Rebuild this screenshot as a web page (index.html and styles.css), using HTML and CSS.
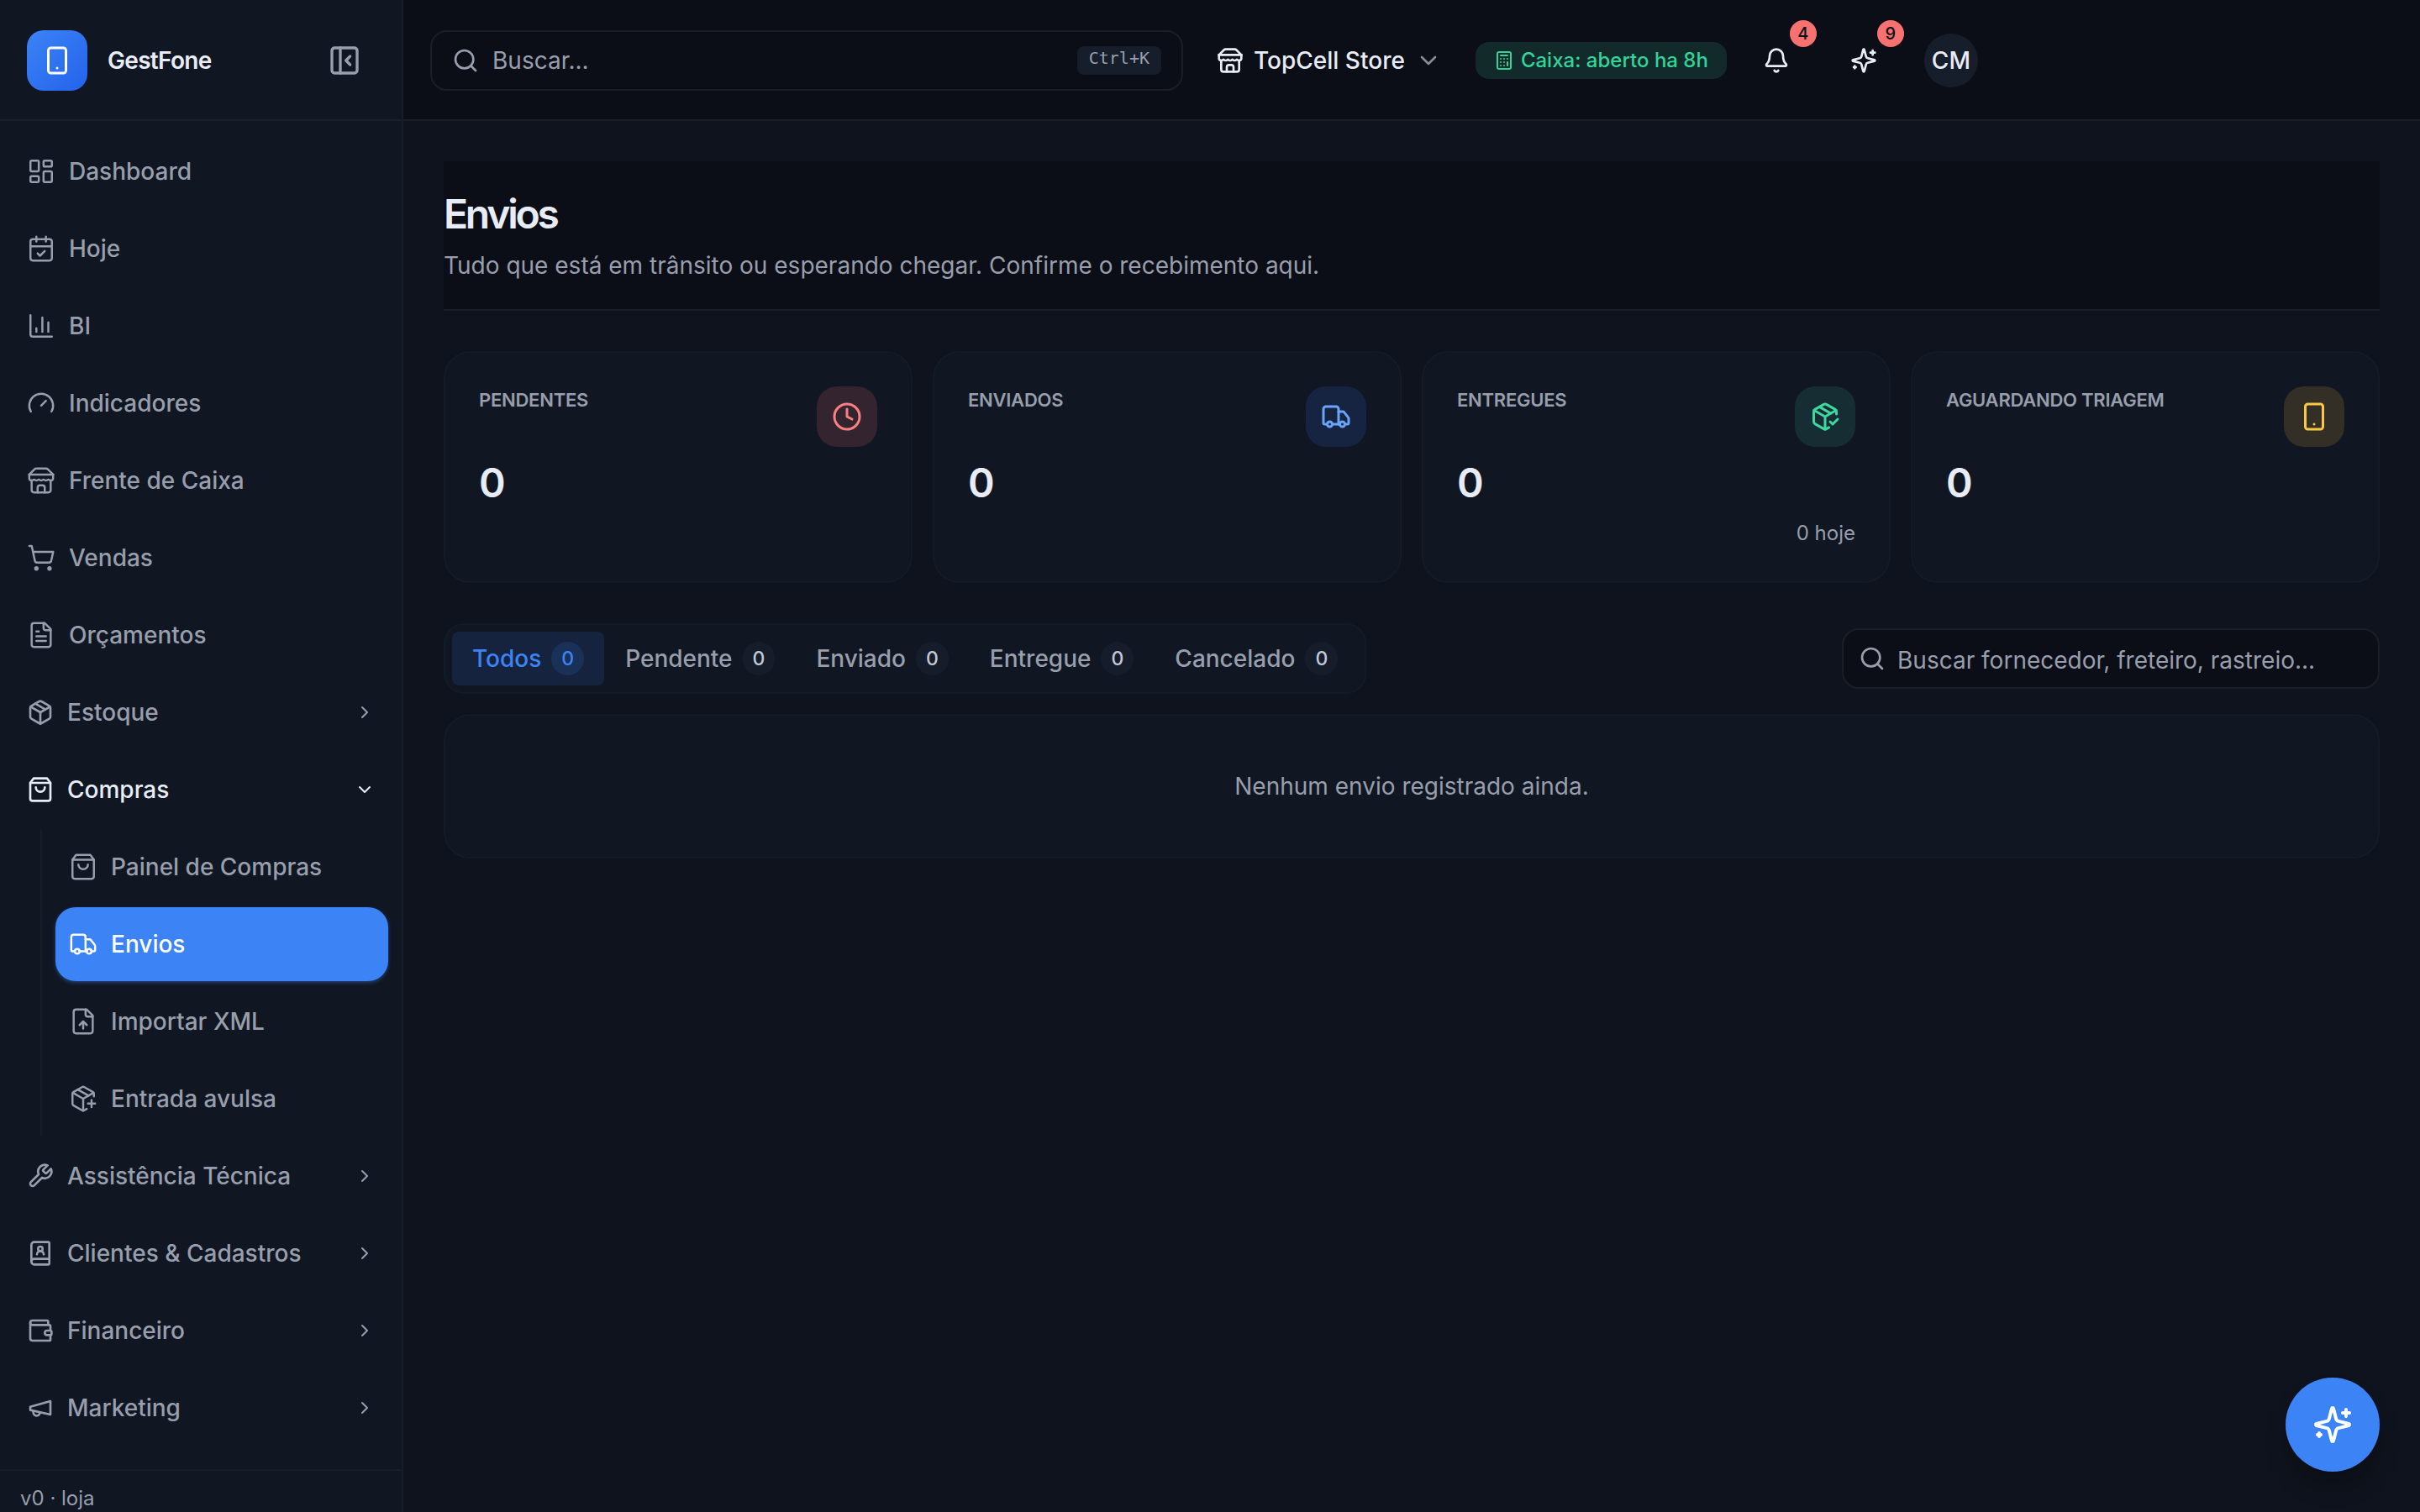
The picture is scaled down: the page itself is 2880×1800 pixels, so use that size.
FILE: index.html
```html
<!DOCTYPE html>
<html lang="pt-BR">
<head>
    <meta charset="UTF-8">
    <meta name="viewport" content="width=device-width, initial-scale=1.0">
    <title>Envios - GestFone</title>
    <link rel="stylesheet" href="styles.css">
</head>
<body>
    <!-- icons -->
    <svg class="sprite" width="0" height="0">
        <symbol id="phone" viewBox="0 0 24 24"><rect x="5" y="2" width="14" height="20" rx="2"/><path d="M12 18h.01"/></symbol>
        <symbol id="panel" viewBox="0 0 24 24"><rect x="3" y="3" width="18" height="18" rx="2"/><path d="M9 3v18"/><path d="m16 15-3-3 3-3"/></symbol>
        <symbol id="dashboard" viewBox="0 0 24 24"><rect x="3" y="3" width="7" height="9" rx="1"/><rect x="14" y="3" width="7" height="5" rx="1"/><rect x="14" y="12" width="7" height="9" rx="1"/><rect x="3" y="16" width="7" height="5" rx="1"/></symbol>
        <symbol id="calendar" viewBox="0 0 24 24"><path d="M8 2v4M16 2v4"/><rect x="3" y="4" width="18" height="18" rx="2"/><path d="M3 10h18"/><path d="m9 16 2 2 4-4"/></symbol>
        <symbol id="chart" viewBox="0 0 24 24"><path d="M3 3v16a2 2 0 0 0 2 2h16"/><path d="M18 17V9M13 17V5M8 17v-3"/></symbol>
        <symbol id="gauge" viewBox="0 0 24 24"><path d="m12 14 4-4"/><path d="M3.34 19a10 10 0 1 1 17.32 0"/></symbol>
        <symbol id="store" viewBox="0 0 24 24"><path d="m2 7 4.41-4.41A2 2 0 0 1 7.83 2h8.34a2 2 0 0 1 1.42.59L22 7"/><path d="M4 12v8a2 2 0 0 0 2 2h12a2 2 0 0 0 2-2v-8"/><path d="M15 22v-4a2 2 0 0 0-2-2h-2a2 2 0 0 0-2 2v4"/><path d="M2 7h20"/><path d="M22 7v3a2 2 0 0 1-2 2a2.7 2.7 0 0 1-1.59-.63.7.7 0 0 0-.82 0A2.7 2.7 0 0 1 16 12a2.7 2.7 0 0 1-1.59-.63.7.7 0 0 0-.82 0A2.7 2.7 0 0 1 12 12a2.7 2.7 0 0 1-1.59-.63.7.7 0 0 0-.82 0A2.7 2.7 0 0 1 8 12a2.7 2.7 0 0 1-1.59-.63.7.7 0 0 0-.82 0A2.7 2.7 0 0 1 4 12a2 2 0 0 1-2-2V7"/></symbol>
        <symbol id="cart" viewBox="0 0 24 24"><circle cx="8" cy="21" r="1"/><circle cx="19" cy="21" r="1"/><path d="M2.05 2.05h2l2.66 12.42a2 2 0 0 0 2 1.58h9.78a2 2 0 0 0 1.95-1.57l1.65-7.43H5.12"/></symbol>
        <symbol id="file-text" viewBox="0 0 24 24"><path d="M15 2H6a2 2 0 0 0-2 2v16a2 2 0 0 0 2 2h12a2 2 0 0 0 2-2V7Z"/><path d="M14 2v4a2 2 0 0 0 2 2h4"/><path d="M10 9H8M16 13H8M16 17H8"/></symbol>
        <symbol id="file-up" viewBox="0 0 24 24"><path d="M15 2H6a2 2 0 0 0-2 2v16a2 2 0 0 0 2 2h12a2 2 0 0 0 2-2V7Z"/><path d="M14 2v4a2 2 0 0 0 2 2h4"/><path d="M12 12v6"/><path d="m15 15-3-3-3 3"/></symbol>
        <symbol id="package" viewBox="0 0 24 24"><path d="M11 21.73a2 2 0 0 0 2 0l7-4A2 2 0 0 0 21 16V8a2 2 0 0 0-1-1.73l-7-4a2 2 0 0 0-2 0l-7 4A2 2 0 0 0 3 8v8a2 2 0 0 0 1 1.73z"/><path d="M12 22V12"/><path d="M3.29 7 12 12l8.71-5"/><path d="m7.5 4.27 9 5.15"/></symbol>
        <symbol id="package-plus" viewBox="0 0 24 24"><path d="M16 16h6M19 13v6"/><path d="M21 10V8a2 2 0 0 0-1-1.73l-7-4a2 2 0 0 0-2 0l-7 4A2 2 0 0 0 3 8v8a2 2 0 0 0 1 1.73l7 4a2 2 0 0 0 2 0l2-1.14"/><path d="m7.5 4.27 9 5.15"/><path d="M3.29 7 12 12l8.71-5M12 22V12"/></symbol>
        <symbol id="package-check" viewBox="0 0 24 24"><path d="m16 16 2 2 4-4"/><path d="M21 10V8a2 2 0 0 0-1-1.73l-7-4a2 2 0 0 0-2 0l-7 4A2 2 0 0 0 3 8v8a2 2 0 0 0 1 1.73l7 4a2 2 0 0 0 2 0l2-1.14"/><path d="m7.5 4.27 9 5.15"/><path d="M3.29 7 12 12l8.71-5M12 22V12"/></symbol>
        <symbol id="bag" viewBox="0 0 24 24"><path d="M6 2 3 6v14a2 2 0 0 0 2 2h14a2 2 0 0 0 2-2V6l-3-4Z"/><path d="M3 6h18"/><path d="M16 10a4 4 0 0 1-8 0"/></symbol>
        <symbol id="truck" viewBox="0 0 24 24"><path d="M14 18V6a2 2 0 0 0-2-2H4a2 2 0 0 0-2 2v11a1 1 0 0 0 1 1h2"/><path d="M15 18H9"/><path d="M19 18h2a1 1 0 0 0 1-1v-3.65a1 1 0 0 0-.22-.624l-3.48-4.35A1 1 0 0 0 17.52 8H14"/><circle cx="17" cy="18" r="2"/><circle cx="7" cy="18" r="2"/></symbol>
        <symbol id="wrench" viewBox="0 0 24 24"><path d="M14.7 6.3a1 1 0 0 0 0 1.4l1.6 1.6a1 1 0 0 0 1.4 0l3.77-3.77a6 6 0 0 1-7.94 7.94l-6.91 6.91a2.12 2.12 0 0 1-3-3l6.91-6.91a6 6 0 0 1 7.94-7.94l-3.76 3.76z"/></symbol>
        <symbol id="book" viewBox="0 0 24 24"><path d="M15 13a3 3 0 1 0-6 0"/><path d="M4 19.5v-15A2.5 2.5 0 0 1 6.5 2H19a1 1 0 0 1 1 1v18a1 1 0 0 1-1 1H6.5a1 1 0 0 1 0-5H20"/><circle cx="12" cy="8" r="2"/></symbol>
        <symbol id="wallet" viewBox="0 0 24 24"><path d="M19 7V4a1 1 0 0 0-1-1H5a2 2 0 0 0 0 4h15a1 1 0 0 1 1 1v4h-3a2 2 0 0 0 0 4h3a1 1 0 0 0 1-1v-2a1 1 0 0 0-1-1"/><path d="M3 5v14a2 2 0 0 0 2 2h15a1 1 0 0 0 1-1v-4"/></symbol>
        <symbol id="megaphone" viewBox="0 0 24 24"><path d="m3 11 18-5v12L3 14v-3z"/><path d="M11.6 16.8a3 3 0 1 1-5.8-1.6"/></symbol>
        <symbol id="right" viewBox="0 0 24 24"><path d="m9 18 6-6-6-6"/></symbol>
        <symbol id="down" viewBox="0 0 24 24"><path d="m6 9 6 6 6-6"/></symbol>
        <symbol id="search" viewBox="0 0 24 24"><circle cx="11" cy="11" r="8"/><path d="m21 21-4.3-4.3"/></symbol>
        <symbol id="calculator" viewBox="0 0 24 24"><rect x="4" y="2" width="16" height="20" rx="2"/><path d="M8 6h8M16 14v4M16 10h.01M12 10h.01M8 10h.01M12 14h.01M8 14h.01M12 18h.01M8 18h.01"/></symbol>
        <symbol id="bell" viewBox="0 0 24 24"><path d="M10.268 21a2 2 0 0 0 3.464 0"/><path d="M3.262 15.326A1 1 0 0 0 4 17h16a1 1 0 0 0 .74-1.673C19.41 13.956 18 12.499 18 8A6 6 0 0 0 6 8c0 4.499-1.411 5.956-2.738 7.326"/></symbol>
        <symbol id="sparkles" viewBox="0 0 24 24"><path d="M9.937 15.5A2 2 0 0 0 8.5 14.063l-6.135-1.582a.5.5 0 0 1 0-.962L8.5 9.936A2 2 0 0 0 9.937 8.5l1.582-6.135a.5.5 0 0 1 .963 0L14.063 8.5A2 2 0 0 0 15.5 9.937l6.135 1.581a.5.5 0 0 1 0 .964L15.5 14.063a2 2 0 0 0-1.437 1.437l-1.582 6.135a.5.5 0 0 1-.963 0z"/><path d="M20 3v4M22 5h-4M4 17v2M5 18H3"/></symbol>
        <symbol id="clock" viewBox="0 0 24 24"><circle cx="12" cy="12" r="10"/><path d="M12 6v6l4 2"/></symbol>
    </svg>

    <div class="app">
        <aside class="sidebar">
            <div class="brand">
                <div class="logo"><svg class="icon"><use href="#phone"/></svg></div>
                <span class="brand-name">GestFone</span>
                <svg class="icon collapse"><use href="#panel"/></svg>
            </div>

            <nav class="nav">
                <a href="#" class="nav-item"><svg class="icon"><use href="#dashboard"/></svg>Dashboard</a>
                <a href="#" class="nav-item"><svg class="icon"><use href="#calendar"/></svg>Hoje</a>
                <a href="#" class="nav-item"><svg class="icon"><use href="#chart"/></svg>BI</a>
                <a href="#" class="nav-item"><svg class="icon"><use href="#gauge"/></svg>Indicadores</a>
                <a href="#" class="nav-item"><svg class="icon"><use href="#store"/></svg>Frente de Caixa</a>
                <a href="#" class="nav-item"><svg class="icon"><use href="#cart"/></svg>Vendas</a>
                <a href="#" class="nav-item"><svg class="icon"><use href="#file-text"/></svg>Orçamentos</a>
                <a href="#" class="nav-item group"><svg class="icon"><use href="#package"/></svg>Estoque<svg class="icon arrow"><use href="#right"/></svg></a>
                <a href="#" class="nav-item group open"><svg class="icon"><use href="#bag"/></svg>Compras<svg class="icon arrow"><use href="#down"/></svg></a>
                <div class="subnav">
                    <a href="#" class="nav-item"><svg class="icon"><use href="#bag"/></svg>Painel de Compras</a>
                    <a href="#" class="nav-item active"><svg class="icon"><use href="#truck"/></svg>Envios</a>
                    <a href="#" class="nav-item"><svg class="icon"><use href="#file-up"/></svg>Importar XML</a>
                    <a href="#" class="nav-item"><svg class="icon"><use href="#package-plus"/></svg>Entrada avulsa</a>
                </div>
                <a href="#" class="nav-item group"><svg class="icon"><use href="#wrench"/></svg>Assistência Técnica<svg class="icon arrow"><use href="#right"/></svg></a>
                <a href="#" class="nav-item group"><svg class="icon"><use href="#book"/></svg>Clientes &amp; Cadastros<svg class="icon arrow"><use href="#right"/></svg></a>
                <a href="#" class="nav-item group"><svg class="icon"><use href="#wallet"/></svg>Financeiro<svg class="icon arrow"><use href="#right"/></svg></a>
                <a href="#" class="nav-item group"><svg class="icon"><use href="#megaphone"/></svg>Marketing<svg class="icon arrow"><use href="#right"/></svg></a>
            </nav>

            <div class="version">v0 · loja</div>
        </aside>

        <div class="main">
            <header class="topbar">
                <div class="search">
                    <svg class="icon"><use href="#search"/></svg>
                    <span>Buscar...</span>
                    <kbd>Ctrl+K</kbd>
                </div>
                <div class="store">
                    <svg class="icon"><use href="#store"/></svg>
                    <span class="store-name">TopCell Store</span>
                    <svg class="icon store-arrow"><use href="#down"/></svg>
                </div>
                <div class="cash"><svg class="icon"><use href="#calculator"/></svg><span>Caixa: aberto ha 8h</span></div>
                <div class="action"><svg class="icon"><use href="#bell"/></svg><span class="badge">4</span></div>
                <div class="action"><svg class="icon"><use href="#sparkles"/></svg><span class="badge">9</span></div>
                <div class="avatar">CM</div>
            </header>

            <main class="content">
                <div class="page-header">
                    <h1>Envios</h1>
                    <p>Tudo que está em trânsito ou esperando chegar. Confirme o recebimento aqui.</p>
                </div>

                <div class="cards">
                    <div class="card">
                        <div class="card-top">
                            <span class="card-label">Pendentes</span>
                            <div class="tile red"><svg class="icon"><use href="#clock"/></svg></div>
                        </div>
                        <div class="card-value">0</div>
                    </div>
                    <div class="card">
                        <div class="card-top">
                            <span class="card-label">Enviados</span>
                            <div class="tile blue"><svg class="icon"><use href="#truck"/></svg></div>
                        </div>
                        <div class="card-value">0</div>
                    </div>
                    <div class="card">
                        <div class="card-top">
                            <span class="card-label">Entregues</span>
                            <div class="tile green"><svg class="icon"><use href="#package-check"/></svg></div>
                        </div>
                        <div class="card-value">0</div>
                        <div class="card-note">0 hoje</div>
                    </div>
                    <div class="card">
                        <div class="card-top">
                            <span class="card-label">Aguardando triagem</span>
                            <div class="tile yellow"><svg class="icon"><use href="#phone"/></svg></div>
                        </div>
                        <div class="card-value">0</div>
                    </div>
                </div>

                <div class="toolbar">
                    <div class="tabs">
                        <a href="#" class="tab selected">Todos<span class="count">0</span></a>
                        <a href="#" class="tab">Pendente<span class="count">0</span></a>
                        <a href="#" class="tab">Enviado<span class="count">0</span></a>
                        <a href="#" class="tab">Entregue<span class="count">0</span></a>
                        <a href="#" class="tab">Cancelado<span class="count">0</span></a>
                    </div>
                    <div class="filter">
                        <svg class="icon"><use href="#search"/></svg>
                        <span>Buscar fornecedor, freteiro, rastreio...</span>
                    </div>
                </div>

                <div class="empty">Nenhum envio registrado ainda.</div>
            </main>
        </div>
    </div>

    <a href="#" class="fab"><svg class="icon"><use href="#sparkles"/></svg></a>
</body>
</html>
```

FILE: styles.css
```css
*{
    margin: 0;
    padding: 0;
    box-sizing: border-box;
}

body{
    font-family: Inter, "Liberation Sans", sans-serif;
    font-size: 28px;
    line-height: 42px;
    color: #e8ecf6;
    background: #0f131d;
    overflow: hidden;
}

a{
    color: inherit;
    text-decoration: none;
}

.sprite{
    position: absolute;
}

.icon{
    width: 32px;
    height: 32px;
    flex-shrink: 0;
    fill: none;
    stroke: currentColor;
    stroke-width: 2;
    stroke-linecap: round;
    stroke-linejoin: round;
}

.app{
    display: flex;
    height: 100vh;
}

/* sidebar */
.sidebar{
    width: 480px;
    flex-shrink: 0;
    display: flex;
    flex-direction: column;
    background: #101723;
    border-right: 2px solid #171e2a;
}

.brand{
    height: 144px;
    flex-shrink: 0;
    display: flex;
    align-items: center;
    padding: 2px 48px 0 32px;
    border-bottom: 2px solid #191f2b;
}

.logo{
    width: 72px;
    height: 72px;
    display: flex;
    align-items: center;
    justify-content: center;
    border-radius: 20px;
    background: linear-gradient(135deg, #3c83f6, #2463eb);
    color: #fff;
}

.logo .icon{
    width: 36px;
    height: 36px;
}

.brand-name{
    margin-left: 24px;
    font-weight: 600;
    letter-spacing: -0.7px;
}

.collapse{
    width: 40px;
    height: 40px;
    margin-left: auto;
    color: #989eac;
}

.nav{
    flex: 1;
    display: flex;
    flex-direction: column;
    gap: 4px;
    padding: 16px;
    color: #989eac;
}

.nav-item{
    height: 88px;
    flex-shrink: 0;
    display: flex;
    align-items: center;
    gap: 16px;
    padding: 0 16px;
    border-radius: 24px;
    font-weight: 500;
}

.nav-item .icon{
    width: 34px;
    height: 34px;
    stroke-width: 1.75;
}

.group .icon{
    width: 32px;
    height: 32px;
    stroke-width: 2;
}

.group .arrow{
    width: 24px;
    height: 24px;
    margin-left: auto;
}

.open{
    color: #e8ecf6;
}

.subnav{
    display: flex;
    flex-direction: column;
    gap: 4px;
    margin-left: 32px;
    padding-left: 16px;
    border-left: 2px solid #171e2a;
}

.active{
    background: #3c83f6;
    color: #fff;
    box-shadow: 0 2px 4px rgba(60, 131, 246, .4);
}

.version{
    height: 51px;
    flex-shrink: 0;
    padding: 15px 24px 0;
    border-top: 2px solid #171e2a;
    font-size: 24px;
    line-height: 36px;
    white-space: nowrap;
    color: #989eac;
}

/* top bar */
.main{
    flex: 1;
    min-width: 0;
}

.topbar{
    height: 144px;
    display: flex;
    align-items: center;
    padding: 2px 0 0 32px;
    background: #0b0e17;
    border-bottom: 2px solid #191e28;
    font-weight: 500;
}

.search{
    width: 896px;
    height: 72px;
    display: flex;
    align-items: center;
    gap: 16px;
    padding: 0 24px;
    border: 2px solid #191e28;
    border-radius: 20px;
    font-weight: 400;
    color: #989eac;
}

kbd{
    height: 34px;
    margin-left: auto;
    padding: 0 14px;
    border-radius: 8px;
    background: #161e2b;
    font-family: "DejaVu Sans Mono", monospace;
    font-size: 20px;
    line-height: 28px;
}

.store{
    display: flex;
    align-items: center;
    gap: 12px;
    margin: 0 40px;
}

.store-arrow{
    color: #858b99;
}

.cash{
    height: 44px;
    display: flex;
    align-items: center;
    gap: 8px;
    padding: 0 22px;
    margin-right: 23px;
    border-radius: 16px;
    background: #122a29;
    font-size: 24px;
    color: #34d399;
}

.cash .icon{
    width: 24px;
    height: 24px;
}

.action{
    position: relative;
    width: 72px;
    height: 72px;
    display: flex;
    align-items: center;
    justify-content: center;
    margin-right: 32px;
}

.badge{
    position: absolute;
    top: -12px;
    right: -12px;
    width: 32px;
    height: 32px;
    border-radius: 50%;
    background: #f87171;
    color: #0b0e17;
    font-size: 20px;
    line-height: 32px;
    text-align: center;
}

.avatar{
    width: 64px;
    height: 64px;
    margin-left: 4px;
    border-radius: 50%;
    background: #171e2b;
    line-height: 64px;
    text-align: center;
}

/* page */
.content{
    display: flex;
    flex-direction: column;
    padding: 48px;
}

.page-header{
    padding: 33px 0 31px;
    margin-bottom: 48px;
    background: #0b0e17;
    border-bottom: 2px solid #191e28;
}

.page-header h1{
    font-size: 48px;
    line-height: 60px;
    font-weight: 600;
    letter-spacing: -3.2px;
}

.page-header p{
    margin-top: 10px;
    color: #989eac;
}

.cards{
    display: grid;
    grid-template-columns: repeat(4, 1fr);
    gap: 24px;
    margin-bottom: 48px;
}

.card{
    height: 276px;
    padding: 40px;
    background: #101723;
    border: 2px solid #141b27;
    border-radius: 32px;
}

.card-top{
    display: flex;
    justify-content: space-between;
}

.card-label{
    font-size: 22px;
    line-height: 32px;
    font-weight: 600;
    letter-spacing: -0.25px;
    text-transform: uppercase;
    color: #989eac;
}

.tile{
    width: 72px;
    height: 72px;
    display: flex;
    align-items: center;
    justify-content: center;
    border-radius: 24px;
}

.tile .icon{
    width: 36px;
    height: 36px;
}

.red{
    background: #332430;
    color: #f98080;
}

.blue{
    background: #162441;
    color: #6ba3f8;
}

.green{
    background: #162e33;
    color: #3fd6a0;
}

.yellow{
    background: #332e26;
    color: #fbc941;
}

.card-value{
    margin: 19px 0 18px;
    font-size: 48px;
    line-height: 48px;
    font-weight: 600;
}

.card-note{
    font-size: 24px;
    line-height: 36px;
    text-align: right;
    color: #989eac;
}

.toolbar{
    display: flex;
    align-items: center;
    justify-content: space-between;
    margin-bottom: 24px;
}

.tabs{
    height: 84px;
    display: flex;
    align-items: center;
    gap: 1px;
    padding: 0 8px;
    background: #101723;
    border: 2px solid #141b27;
    border-radius: 24px;
    color: #989eac;
}

.tab{
    height: 64px;
    display: flex;
    align-items: center;
    gap: 12px;
    padding: 0 24px;
    border-radius: 8px;
    font-weight: 500;
}

.count{
    height: 40px;
    padding: 0 12px;
    border-radius: 20px;
    background: #151c2a;
    color: #c3c8d3;
    font-size: 23px;
    line-height: 40px;
}

.selected{
    background: #16233e;
    color: #3c83f6;
}

.selected .count{
    background: #1a3157;
    color: #3c83f6;
}

.filter{
    width: 640px;
    height: 72px;
    display: flex;
    align-items: center;
    gap: 14px;
    padding: 0 18px;
    background: #0b0e17;
    border: 2px solid #191e28;
    border-radius: 20px;
    color: #989eac;
}

.filter span{
    padding-top: 3px;
}

.empty{
    height: 172px;
    background: #101723;
    border: 2px solid #141b27;
    border-radius: 32px;
    line-height: 168px;
    text-align: center;
    color: #989eac;
}

.fab{
    position: fixed;
    right: 48px;
    bottom: 48px;
    width: 112px;
    height: 112px;
    display: flex;
    align-items: center;
    justify-content: center;
    border-radius: 50%;
    background: #3c83f6;
    color: #fff;
    box-shadow: 0 20px 30px -6px rgba(0, 0, 0, .3);
}

.fab .icon{
    width: 48px;
    height: 48px;
}
```
